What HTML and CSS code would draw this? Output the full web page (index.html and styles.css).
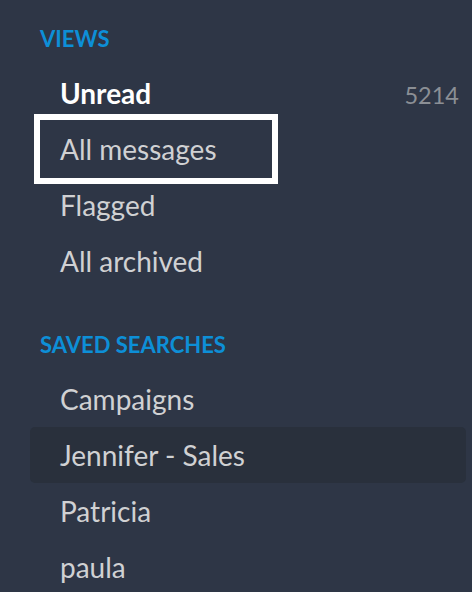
FILE: index.html
```html
<!DOCTYPE html>
<html>
<head>
<meta charset="utf-8">
<link rel="stylesheet" href="styles.css">
</head>
<body>
<nav class="sidebar">
  <section class="section">
    <h2 class="section-title">VIEWS</h2>
    <ul class="list">
      <li class="item item-unread"><span class="label">Unread</span><span class="count">5214</span></li>
      <li class="item item-focused"><span class="label">All messages</span></li>
      <li class="item"><span class="label">Flagged</span></li>
      <li class="item"><span class="label">All archived</span></li>
    </ul>
  </section>
  <section class="section">
    <h2 class="section-title">SAVED SEARCHES</h2>
    <ul class="list">
      <li class="item"><span class="label">Campaigns</span></li>
      <li class="item item-hover"><span class="label">Jennifer - Sales</span></li>
      <li class="item"><span class="label">Patricia</span></li>
      <li class="item"><span class="label">paula</span></li>
    </ul>
  </section>
</nav>
</body>
</html>
```
FILE: styles.css
```css
html, body {
  margin: 0;
  padding: 0;
  background: #2e3646;
  height: 100%;
  overflow: hidden;
}
.sidebar {
  font-family: Lato, "Open Sans", sans-serif;
  padding: 27px 6px 0 30px;
  display: flex;
  flex-direction: column;
  gap: 44px;
}
.section-title {
  margin: 0 0 14px 10px;
  font-size: 22px;
  line-height: 24px;
  font-weight: 700;
  color: #0d8fd7;
  letter-spacing: 0;
}
.list {
  list-style: none;
  margin: 0;
  padding: 0;
}
.item {
  position: relative;
  display: flex;
  align-items: baseline;
  justify-content: space-between;
  height: 56px;
  line-height: 56px;
  padding: 0 7px 0 30px;
  font-size: 28px;
  color: #d0d1d3;
  border-radius: 5px;
}
.item-unread .label {
  font-weight: 700;
  color: #ffffff;
}
.count {
  font-size: 23.5px;
  color: #8b8f95;
}
.item-hover {
  background: #29303c;
}
.item-focused::after {
  content: "";
  position: absolute;
  left: 4px;
  top: -7px;
  width: 232px;
  height: 58px;
  border: 6px solid #ffffff;
}
```
